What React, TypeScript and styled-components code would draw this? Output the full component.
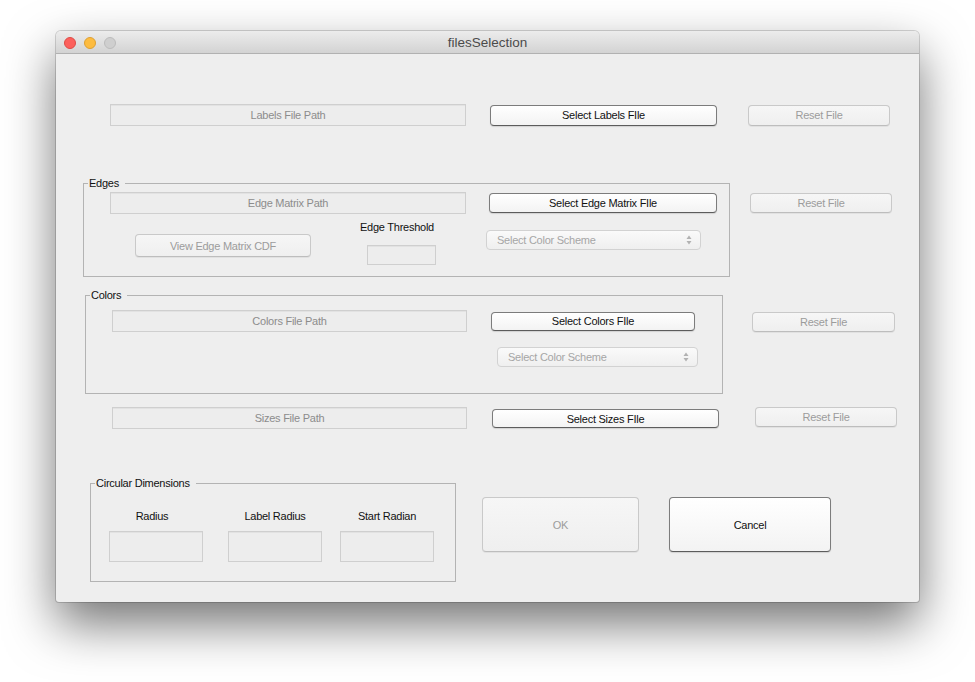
import React from 'react';
import styled, { createGlobalStyle } from 'styled-components';

const GlobalStyle = createGlobalStyle`
  html, body {
    margin: 0;
    padding: 0;
    background: #ffffff;
  }
  body {
    font-family: 'Liberation Sans', Arial, sans-serif;
  }
  * {
    box-sizing: border-box;
  }
`;

// Desktop + window chrome
const Desktop = styled.div`
  width: 975px;
  height: 682px;
  padding-top: 31px;
  overflow: hidden;
`;

const Window = styled.div`
  width: 863px;
  margin: 0 auto;
  background: #eeeeee;
  border-radius: 5px 5px 3px 3px;
  box-shadow: 0 0 0 1px rgba(0, 0, 0, 0.16), 0 22px 50px rgba(0, 0, 0, 0.55);
  overflow: hidden;
`;

const TitleBar = styled.div`
  height: 23px;
  display: grid;
  grid-template-columns: 1fr auto 1fr;
  align-items: center;
  background: linear-gradient(#ececec, #d3d3d3);
  border-bottom: 1px solid #b1b1b1;
`;

const Lights = styled.div`
  display: flex;
  gap: 8px;
  padding-left: 8px;
  margin-top: 1px;
`;

const Light = styled.span<{ $fill: string; $edge: string }>`
  width: 12px;
  height: 12px;
  border-radius: 50%;
  background: ${p => p.$fill};
  border: 1px solid ${p => p.$edge};
`;

const Title = styled.div`
  font-size: 13.5px;
  color: #4b4b4b;
`;

const Body = styled.div`
  height: 548px;
  display: flex;
  flex-direction: column;
  font-size: 11px;
  letter-spacing: -0.25px;
`;

// Layout rows
const Row = styled.div<{ $top: number; $left: number; $align?: string }>`
  display: flex;
  align-items: ${p => p.$align || 'center'};
  margin-top: ${p => p.$top}px;
  padding-left: ${p => p.$left}px;
`;

const Slot = styled.div<{ $left?: number; $top?: number }>`
  margin-left: ${p => p.$left || 0}px;
  margin-top: ${p => p.$top || 0}px;
`;

// Controls
const PathField = styled.div<{ $w: number; $h?: number }>`
  width: ${p => p.$w}px;
  height: ${p => p.$h || 22}px;
  display: flex;
  align-items: center;
  justify-content: center;
  background: #ededed;
  border: 1px solid #cfcfcf;
  box-shadow: inset 0 1px 0 #e2e2e2;
  color: #8c8c8c;
`;

const PushButton = styled.button<{ $w: number; $h: number }>`
  width: ${p => p.$w}px;
  height: ${p => p.$h}px;
  padding: 0;
  font-family: 'Liberation Sans', Arial, sans-serif;
  font-size: 11px;
  letter-spacing: -0.25px;
  color: #111111;
  background: linear-gradient(#ffffff, #f3f3f3);
  border: 1px solid #7c7c7c;
  border-bottom-color: #5c5c5c;
  border-radius: 4px;
  box-shadow: 0 1px 1px rgba(0, 0, 0, 0.12);

  &:disabled {
    color: #9c9c9c;
    background: linear-gradient(#f6f6f6, #efefef);
    border-color: #c9c9c9;
    border-bottom-color: #bdbdbd;
    box-shadow: 0 1px 0 rgba(0, 0, 0, 0.05);
  }
`;

const Combo = styled.div<{ $w: number }>`
  width: ${p => p.$w}px;
  height: 20px;
  display: flex;
  align-items: center;
  justify-content: space-between;
  padding: 0 8px 0 10px;
  color: #a6a6a6;
  background: linear-gradient(#fafafa, #efefef);
  border: 1px solid #d2d2d2;
  border-radius: 4px;
`;

const Label = styled.div<{ $nudge?: number }>`
  line-height: 13px;
  color: #111111;
  text-align: center;
  margin-left: ${p => p.$nudge || 0}px;
`;

// Titled groups
const Group = styled.fieldset<{ $w: number; $h: number }>`
  width: ${p => p.$w}px;
  height: ${p => p.$h}px;
  margin: 0;
  padding: 0;
  min-width: 0;
  border: 1px solid #b3b3b3;
`;

const GroupTitle = styled.legend`
  margin-left: 4px;
  padding: 0 6px 0 1px;
  font-size: 11px;
  line-height: 13px;
  color: #111111;
`;

const GroupBody = styled.div<{ $top: number; $left: number }>`
  padding: ${p => p.$top}px 0 0 ${p => p.$left}px;
`;

const ThresholdColumn = styled.div`
  width: 78px;
  display: flex;
  flex-direction: column;
`;

const DimColumn = styled.div<{ $left: number }>`
  width: 94px;
  margin-left: ${p => p.$left}px;
  display: flex;
  flex-direction: column;
`;

const Arrows = () => (
  <svg width="6" height="10" viewBox="0 0 6 10">
    <path d="M3 0.5 L5.5 4 L0.5 4 Z" fill="#b2b2b2" />
    <path d="M3 9.5 L5.5 6 L0.5 6 Z" fill="#b2b2b2" />
  </svg>
);

export default function App() {
  return (
    <Desktop>
      <GlobalStyle />
      <Window>
        <TitleBar>
          <Lights>
            <Light $fill="#fc605c" $edge="#de4b45" />
            <Light $fill="#fdbc40" $edge="#dea032" />
            <Light $fill="#cfcfcf" $edge="#bcbcbc" />
          </Lights>
          <Title>filesSelection</Title>
          <div />
        </TitleBar>

        <Body>
          <Row $top={50} $left={54}>
            <PathField $w={356}>Labels File Path</PathField>
            <Slot $left={24}>
              <PushButton $w={227} $h={21}>Select Labels FIle</PushButton>
            </Slot>
            <Slot $left={31}>
              <PushButton $w={142} $h={21} disabled>Reset File</PushButton>
            </Slot>
          </Row>

          <Row $top={51} $left={27} $align="flex-start">
            <Group $w={647} $h={100}>
              <GroupTitle>Edges</GroupTitle>
              <GroupBody $top={2} $left={26}>
                <Row $top={0} $left={0}>
                  <PathField $w={356}>Edge Matrix Path</PathField>
                  <Slot $left={23}>
                    <PushButton $w={228} $h={20}>Select Edge Matrix FIle</PushButton>
                  </Slot>
                </Row>
                <Row $top={7} $left={0} $align="flex-start">
                  <Slot $left={25} $top={13}>
                    <PushButton $w={176} $h={23} disabled>View Edge Matrix CDF</PushButton>
                  </Slot>
                  <Slot $left={47}>
                    <ThresholdColumn>
                      <Label>Edge Threshold</Label>
                      <Slot $left={9} $top={11}>
                        <PathField $w={69} $h={20} />
                      </Slot>
                    </ThresholdColumn>
                  </Slot>
                  <Slot $left={50} $top={9}>
                    <Combo $w={215}>
                      <span>Select Color Scheme</span>
                      <Arrows />
                    </Combo>
                  </Slot>
                </Row>
              </GroupBody>
            </Group>
            <Slot $left={20} $top={16}>
              <PushButton $w={142} $h={20} disabled>Reset File</PushButton>
            </Slot>
          </Row>

          <Row $top={12} $left={29} $align="flex-start">
            <Group $w={638} $h={105}>
              <GroupTitle>Colors</GroupTitle>
              <GroupBody $top={8} $left={26}>
                <Row $top={0} $left={0}>
                  <PathField $w={355}>Colors File Path</PathField>
                  <Slot $left={24}>
                    <PushButton $w={204} $h={19}>Select Colors FIle</PushButton>
                  </Slot>
                </Row>
                <Row $top={15} $left={385}>
                  <Combo $w={201}>
                    <span>Select Color Scheme</span>
                    <Arrows />
                  </Combo>
                </Row>
              </GroupBody>
            </Group>
            <Slot $left={29} $top={23}>
              <PushButton $w={143} $h={20} disabled>Reset File</PushButton>
            </Slot>
          </Row>

          <Row $top={13} $left={56} $align="flex-start">
            <PathField $w={355}>Sizes File Path</PathField>
            <Slot $left={25} $top={2}>
              <PushButton $w={227} $h={19}>Select Sizes FIle</PushButton>
            </Slot>
            <Slot $left={36}>
              <PushButton $w={142} $h={20} disabled>Reset File</PushButton>
            </Slot>
          </Row>

          <Row $top={48} $left={34} $align="flex-start">
            <Group $w={366} $h={105}>
              <GroupTitle>Circular Dimensions</GroupTitle>
              <GroupBody $top={20} $left={0}>
                <Row $top={0} $left={0} $align="flex-start">
                  <DimColumn $left={18}>
                    <Label $nudge={-8}>Radius</Label>
                    <Slot $top={8}>
                      <PathField $w={94} $h={31} />
                    </Slot>
                  </DimColumn>
                  <DimColumn $left={25}>
                    <Label>Label Radius</Label>
                    <Slot $top={8}>
                      <PathField $w={94} $h={31} />
                    </Slot>
                  </DimColumn>
                  <DimColumn $left={18}>
                    <Label>Start Radian</Label>
                    <Slot $top={8}>
                      <PathField $w={94} $h={31} />
                    </Slot>
                  </DimColumn>
                </Row>
              </GroupBody>
            </Group>
            <Slot $left={26} $top={20}>
              <PushButton $w={157} $h={55} disabled>OK</PushButton>
            </Slot>
            <Slot $left={30} $top={20}>
              <PushButton $w={162} $h={55}>Cancel</PushButton>
            </Slot>
          </Row>
        </Body>
      </Window>
    </Desktop>
  );
}
